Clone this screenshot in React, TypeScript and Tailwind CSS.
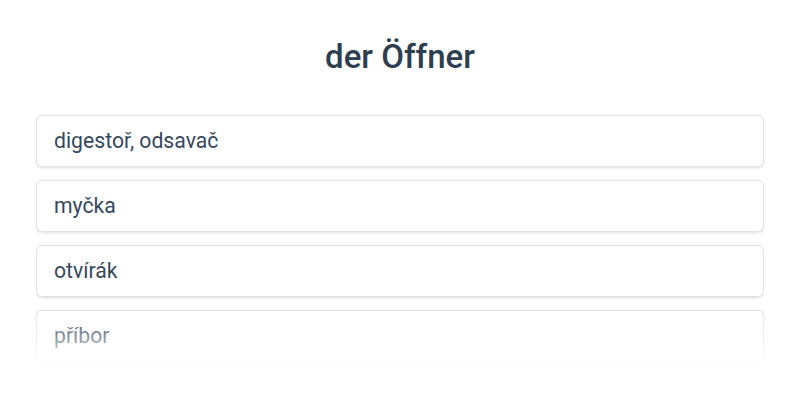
import React from 'react';

const options = ['digestoř, odsavač', 'myčka', 'otvírák', 'příbor'];

const App = () => {
  return (
    <div className="w-[800px] h-[400px] bg-white overflow-hidden" style={{ fontFamily: 'Roboto, "Noto Sans", sans-serif' }}>
      {/* Word Header */}
      <h1 className="pt-[36px] text-center text-[33px] leading-[42px] font-medium text-[#2c3e50]">der Öffner</h1>

      {/* Answer Options */}
      <div className="relative mt-[36px] mx-[36px] h-[252px] overflow-hidden">
        <div className="flex flex-col gap-[13px] pt-[1px]">
          {options.map((item) => (
            <div
              key={item}
              className="h-[52px] flex items-center px-[17px] bg-white border border-[#e2e2e2] rounded-[6px] shadow-[0_1px_3px_rgba(0,0,0,0.12)] text-[21.2px] text-[#34495e]"
            >
              {item}
            </div>
          ))}
        </div>
        <div className="absolute left-0 right-0 bottom-0 h-[60px] bg-gradient-to-b from-white/0 via-white/40 to-white pointer-events-none" />
      </div>
    </div>
  );
};

export default App;
